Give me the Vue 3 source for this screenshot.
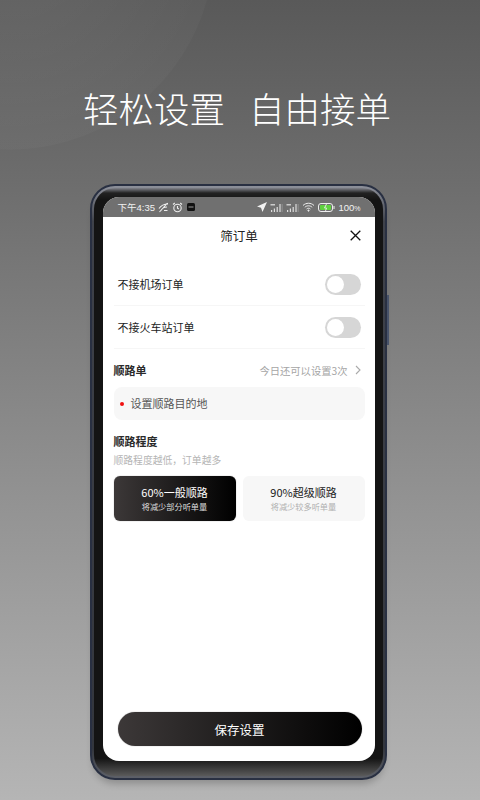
<script setup>
const rows = ['不接机场订单', '不接火车站订单']
const cards = [
  { title: '60%一般顺路', sub: '将减少部分听单量', on: true },
  { title: '90%超级顺路', sub: '将减少较多听单量', on: false }
]
</script>

<template>
  <div class="page">
    <h1 class="headline"><span>轻松设置</span><span>自由接单</span></h1>
    <div class="phone">
      <i class="side-key"></i>
      <div class="bezel">
        <div class="screen">
          <div class="status">
            <div class="status-side">
              <span>下午4:35</span>
              <svg width="11" height="11" viewBox="0 0 11 11" fill="none" stroke="#eee" stroke-width="1.100"><path d="M1 6.500c2-3 5-4.500 9-4.500M3 8.500c1-2 3-3.500 6-3.500M1.500 10 9.500 1M6 8.500h3.500"/></svg>
              <svg width="11" height="11" viewBox="0 0 11 11" fill="none" stroke="#eee" stroke-width="1.100"><circle cx="5.500" cy="6" r="3.700"/><path d="M5.500 4v2.200l1.400.8M1 2.500 2.800 1M10 2.500 8.200 1"/></svg>
              <svg class="badge" width="8" height="8" viewBox="0 0 8 8"><rect width="8" height="8" rx="1.500" fill="#111"/><path d="M1.500 4h5" stroke="#999" stroke-width="1"/></svg>
            </div>
            <div class="status-side right">
              <svg width="10" height="10" viewBox="0 0 10 10"><path d="M10 0 0 4.500l4 1.300L5.500 10z" fill="#f2f2f2"/></svg>
              <svg width="13" height="9" viewBox="0 0 13 9"><path d="M1 9V7h1.200v2zM3.800 9V5.500H5V9zM6.600 9V4h1.200v5zM9.400 9V1h1.200v8z" fill="#ddd"/><path d="M11.700 9V1h.8v8z" fill="#999"/><path d="M.5 1h4.500v1.500H.5z" fill="#ccc"/></svg>
              <svg width="13" height="9" viewBox="0 0 13 9"><path d="M1 9V7h1.200v2zM3.800 9V5.500H5V9zM6.600 9V4h1.200v5zM9.400 9V1h1.200v8z" fill="#ddd"/><path d="M11.700 9V1h.8v8z" fill="#999"/><path d="M.5 1h4.500v1.500H.5z" fill="#ccc"/></svg>
              <svg width="13" height="10" viewBox="0 0 13 10" fill="none" stroke="#eee" stroke-width="1"><path d="M1 3.500c3-3 8-3 11 0M2.800 5.300c2-2 5.400-2 7.400 0M4.600 7c1-1 2.800-1 3.800 0"/><circle cx="6.500" cy="8.600" r=".6" fill="#eee"/></svg>
              <svg width="17" height="9" viewBox="0 0 17 9"><rect x=".5" y=".5" width="14" height="8" rx="2.500" fill="none" stroke="#eee"/><rect x="2" y="2" width="11" height="5" rx="1" fill="#5fd13f"/><path d="M16 3v3" stroke="#eee"/><path d="m8.500 1-2 4h2l-1 3" stroke="#eee" fill="none" stroke-width=".9"/></svg>
              <span>100<small>%</small></span>
            </div>
          </div>
          <div class="sheet">
            <div class="top">
              <span>筛订单</span>
              <svg class="close" width="11" height="11" viewBox="0 0 11 11" fill="none" stroke="#111" stroke-width="1.300"><path d="m.7.7 9.600 9.600M10.300.7.700 10.300"/></svg>
            </div>
            <div class="switches">
              <div v-for="r in rows" :key="r" class="switch-row">
                <span class="row-label">{{ r }}</span>
                <span class="toggle"><i></i></span>
              </div>
            </div>
            <div class="route-head">
              <b>顺路单</b>
              <span class="quota">今日还可以设置3次
                <svg width="6" height="10" viewBox="0 0 6 10" fill="none" stroke="#aaa" stroke-width="1.100"><path d="m1 1 4 4-4 4"/></svg>
              </span>
            </div>
            <div class="dest"><i></i><span class="row-label">设置顺路目的地</span></div>
            <b class="degree">顺路程度</b>
            <div class="hint">顺路程度越低，订单越多</div>
            <div class="cards">
              <div v-for="c in cards" :key="c.title" class="card" :class="{ on: c.on }">
                <div class="card-title">{{ c.title }}</div>
                <div class="card-sub">{{ c.sub }}</div>
              </div>
            </div>
            <div class="spacer"></div>
            <button class="save">保存设置</button>
          </div>
        </div>
      </div>
    </div>
  </div>
</template>

<style>
html, body { margin: 0; }
</style>

<style scoped>
.page {
  width: 480px;
  height: 800px;
  overflow: hidden;
  box-sizing: border-box;
  padding-top: 82px;
  font-family: "Noto Sans CJK SC", "Liberation Sans", sans-serif;
  background:
    radial-gradient(circle 205px at 10px -55px, rgba(255,255,255,.08) 0, rgba(255,255,255,.025) 99.500%, rgba(255,255,255,0) 100%),
    linear-gradient(#595959 0, #6e6e6e 190px, #909090 480px, #b5b5b5 800px);
}
.headline {
  margin: 0;
  height: 102px;
  display: flex;
  justify-content: center;
  gap: 24px;
  padding-right: 6px;
  font-size: 35.500px;
  line-height: 52px;
  font-weight: 300;
  color: #fff;
}
.phone {
  position: relative;
  width: 297px;
  height: 596px;
  margin-left: 90px;
  box-sizing: border-box;
  border: 2px solid #293042;
  border-radius: 25px;
  padding: 2px;
  background: linear-gradient(#8d909a, #3f424a 6%, #33363d 95%, #5d6068 100%);
  box-shadow: 0 7px 7px -3px rgba(0,0,0,.2);
}
.side-key {
  position: absolute;
  right: -4px;
  top: 109px;
  width: 2px;
  height: 50px;
  background: #48536a;
}
.bezel {
  height: 100%;
  box-sizing: border-box;
  padding: 9px 8.500px 15px;
  border-radius: 21px;
  background: linear-gradient(#80828a 0, #222 5px, #141414 12px, #141414 97%, #5a5a5a 100%);
}
.screen {
  height: 100%;
  border-radius: 16px;
  overflow: hidden;
  display: flex;
  flex-direction: column;
  background: #fff;
}
.status {
  height: 20px;
  flex: none;
  background: #707070;
  display: flex;
  justify-content: space-between;
  align-items: center;
  padding: 0 14px 0 15px;
  color: #f2f2f2;
  font-size: 9.500px;
  font-family: "Liberation Sans", "Noto Sans CJK SC", sans-serif;
}
.status-side {
  display: flex;
  align-items: center;
  gap: 3px;
}
.status-side .badge { margin-left: 1px; }
.status small { font-size: 7px; }
.sheet {
  flex: 1;
  display: flex;
  flex-direction: column;
  padding: 0 10px 15px 11px;
  color: #222;
}
.top {
  height: 36px;
  flex: none;
  display: flex;
  align-items: center;
  justify-content: center;
  font-size: 12.500px;
  position: relative;
}
.close { position: absolute; right: 4px; top: 13px; }
.switches {
  margin-top: 10px;
  flex: none;
}
.switch-row {
  height: 43px;
  box-sizing: border-box;
  border-bottom: 1px solid #f6f6f6;
  display: flex;
  align-items: center;
  justify-content: space-between;
  padding: 0 4px;
  font-size: 11px;
}
.row-label { padding-bottom: 1px; }
.toggle {
  width: 36px;
  height: 21px;
  box-sizing: border-box;
  border-radius: 11px;
  background: #d6d6d6;
  padding: 2px;
  display: block;
}
.toggle i {
  display: block;
  width: 17px;
  height: 17px;
  border-radius: 50%;
  background: #fff;
}
.route-head {
  height: 38px;
  flex: none;
  box-sizing: border-box;
  padding: 4px 3.500px 0 0;
  display: flex;
  align-items: center;
  justify-content: space-between;
  font-size: 11px;
}
.route-head b, .degree { font-weight: 700; color: #2a2a2a; }
.quota {
  display: flex;
  align-items: center;
  gap: 7.500px;
  font-size: 10.300px;
  color: #a5a5a5;
}
.dest {
  height: 33px;
  flex: none;
  border-radius: 8px;
  background: #f7f7f7;
  display: flex;
  align-items: center;
  padding-left: 6px;
  gap: 7px;
  font-size: 11px;
  color: #555;
}
.dest i {
  width: 4px;
  height: 4px;
  border-radius: 50%;
  background: #f01010;
}
.degree {
  margin-top: 12px;
  height: 18px;
  line-height: 18px;
  font-size: 11px;
}
.hint {
  margin-top: 3px;
  height: 15px;
  line-height: 15px;
  font-size: 9.800px;
  color: #b5b5b5;
}
.cards {
  margin-top: 8px;
  display: flex;
  gap: 7px;
}
.card {
  flex: 1;
  height: 45px;
  border-radius: 6px;
  background: #f7f7f7;
  display: flex;
  flex-direction: column;
  align-items: center;
  justify-content: center;
  color: #222;
}
.card.on {
  color: #fff;
  background: linear-gradient(90deg, #3c3838, #000);
  box-shadow: 0 0 1px #777;
}
.card-title { font-size: 11px; line-height: 15px; }
.card-sub { font-size: 8.200px; line-height: 12px; color: #b0b0b0; }
.card.on .card-sub { color: #ddd; }
.spacer { flex: 1; }
.save {
  width: 244px;
  height: 34px;
  margin-left: 4px;
  flex: none;
  border: 0;
  border-radius: 17px;
  background: linear-gradient(90deg, #3c3838, #000);
  box-shadow: 0 0 1px #777;
  color: #fff;
  font-family: inherit;
  font-size: 12.500px;
  padding: 0;
}
</style>
